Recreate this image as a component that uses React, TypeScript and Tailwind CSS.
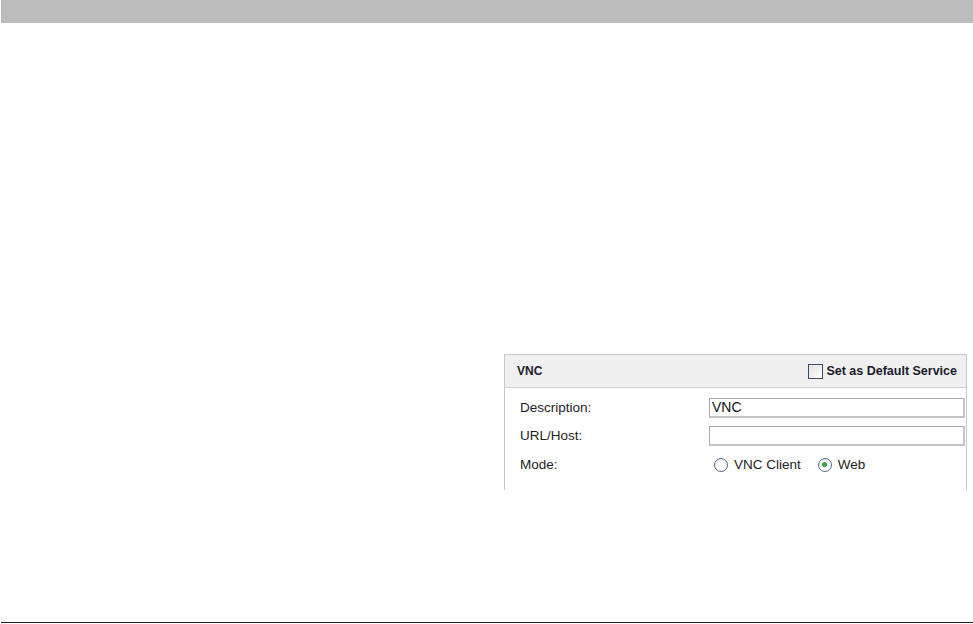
import React from 'react';

const font = { fontFamily: '"Liberation Sans", Arial, sans-serif' };

const Radio: React.FC<{ checked?: boolean; label: string }> = ({ checked, label }) => (
  <label className="flex items-center gap-[6px]">
    <span className="w-[14px] h-[14px] rounded-full border border-[#5a6e8c] bg-white flex items-center justify-center shadow-[inset_0_1px_2px_rgba(0,0,0,0.15)]">
      {checked && <span className="w-[5px] h-[5px] rounded-full bg-[#2fa53a]" />}
    </span>
    <span>{label}</span>
  </label>
);

const Field: React.FC<{ value?: string }> = ({ value }) => (
  <div className="w-[256px] h-[20px] border border-[#a8a8a8] border-r-2 border-b-2 border-r-[#c4c4c4] border-b-[#c4c4c4] bg-white flex items-center px-[2px] text-[14px] text-[#111]">
    {value}
  </div>
);

export default function App() {
  return (
    <div className="w-[973px] h-[624px] bg-white flex flex-col" style={font}>
      <div className="h-[23px] ml-[1px] bg-[#bcbcbc]" />

      <div className="pl-[504px] pt-[331px]">
        <div className="w-[463px] h-[136px] border-t border-l border-r border-[#c9c9c9] flex flex-col">
          <div className="h-[33px] bg-[#f0f0f0] border-b border-[#cfcfcf] flex items-center justify-between pl-[12px] pr-[9px]">
            <span className="text-[12px] font-bold text-[#1c1c2c]">VNC</span>
            <label className="flex items-center gap-[3px] text-[12.5px] font-bold text-[#1c1c2c]">
              <span className="w-[15px] h-[15px] border border-[#3c4a6a] bg-gradient-to-br from-[#e2e2e2] to-white" />
              <span>Set as Default Service</span>
            </label>
          </div>

          <div className="grid grid-cols-[189px_256px] items-center gap-y-[8px] pl-[15px] pt-[10px] text-[13.5px] text-[#1e1e24]">
            <span>Description:</span>
            <Field value="VNC" />
            <span>URL/Host:</span>
            <Field />
            <span>Mode:</span>
            <div className="flex items-center gap-[17px] pl-[5px]">
              <Radio label="VNC Client" />
              <Radio checked label="Web" />
            </div>
          </div>
        </div>
      </div>

      <div className="mt-auto mb-[1px] ml-[1px] h-[1.5px] bg-[#222]" />
    </div>
  );
}
